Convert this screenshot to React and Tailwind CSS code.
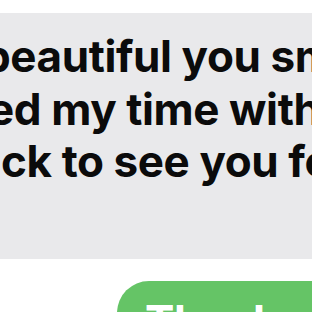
const lines = [
  { text: "beautiful you smile", offset: "-ml-[17px]" },
  { text: "ed my time with you", offset: "-ml-[12px]" },
  { text: "ck to see you for", offset: "ml-[1px]" },
];

const App = () => {
  return (
    <div className="w-[312px] h-[312px] overflow-hidden bg-white pt-[13px] font-['Inter','Liberation_Sans',sans-serif]">
      <div className="w-[360px] h-[246px] bg-[#e9e9eb] pt-[17px] overflow-hidden">
        {lines.map((line) => (
          <div
            key={line.text}
            className={`whitespace-nowrap text-[44px] leading-[52.5px] font-bold tracking-[-0.4px] text-[#0b0b0b] ${line.offset}`}
          >
            {line.text}
          </div>
        ))}
      </div>

      <div className="mt-[22px] ml-[117px] w-[260px] h-[80px] bg-[#65c466] rounded-tl-[32px] pl-[28px] pt-[14px]">
        <span className="whitespace-nowrap text-[44px] leading-[52px] font-bold tracking-[-0.4px] text-white">Thank you</span>
      </div>
    </div>
  )
}

export default App
